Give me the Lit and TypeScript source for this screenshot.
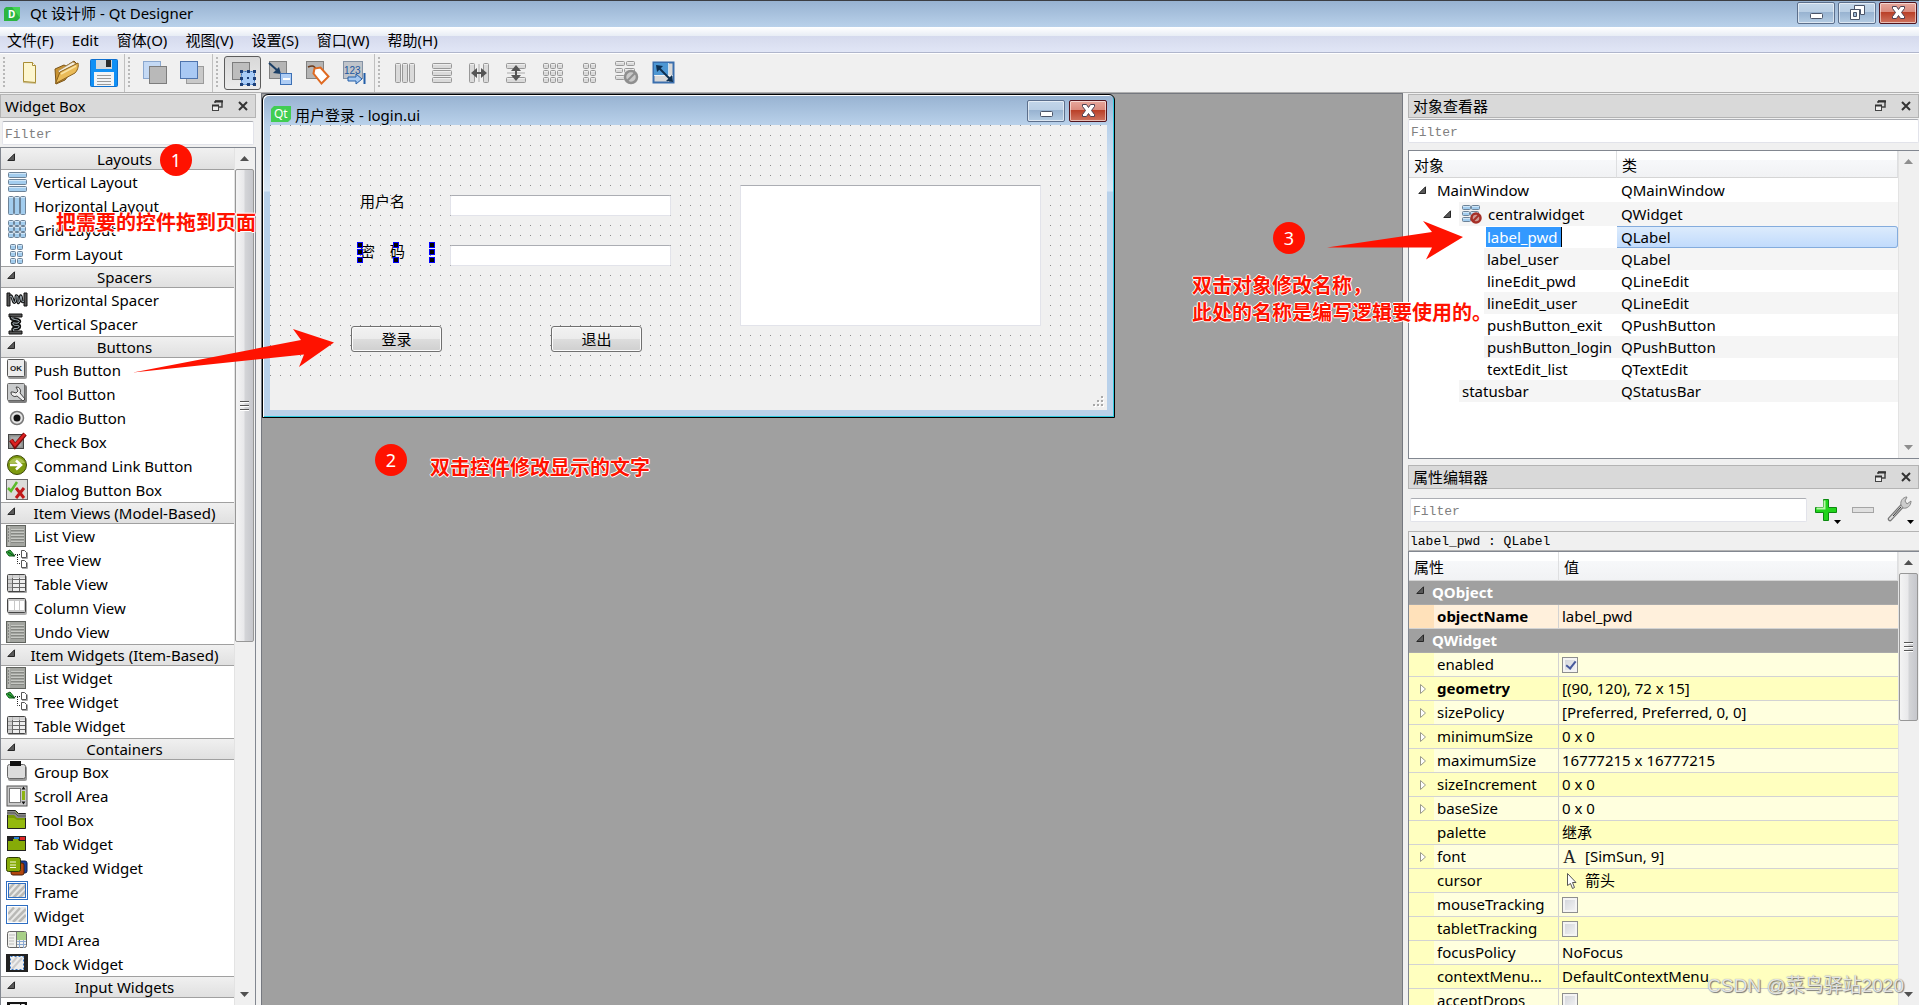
import { LitElement, html, svg, css, nothing, TemplateResult } from "lit";
import { customElement } from "lit/decorators.js";
import { classMap } from "lit/directives/class-map.js";

type Icon = TemplateResult;

const icon = (size: number, body: unknown): Icon =>
  html`<svg class="icon" width=${size} height=${size} viewBox="0 0 ${size} ${size}" aria-hidden="true">${body}</svg>`;

const bars = (rects: number[][], fill: string, stroke: string) =>
  rects.map(([x, y, w, h]) => svg`<rect x=${x + 0.5} y=${y + 0.5} width=${w - 1} height=${h - 1} rx="1" fill=${fill} stroke=${stroke}/>
    <rect x=${x + 1} y=${y + 1} width=${w - 2} height="1" fill="#fff" opacity=".5"/>`);

const cells = (cols: number, rows: number, x0: number, y0: number, size: number, pitch: number) =>
  Array.from({ length: cols * rows }, (_, i) => [x0 + (i % cols) * pitch, y0 + Math.floor(i / cols) * pitch, size, size]);

const BLUE = "#a3cdee";
const BLUE_EDGE = "#6d8398";
const GREY = "#dadada";
const GREY_EDGE = "#989898";

const listIcon = icon(22, svg`<rect x=".5" y=".5" width="19" height="21" fill="#a3a5a0" stroke="#60635e"/>
  <path d="M3 1v20" stroke="#c9cbc6" stroke-width="1"/>
  <path d="M2 4h1M2 7h1M2 10h1M2 13h1M2 16h1" stroke="#555"/>
  <path d="M5 4.500h13M5 7.500h13M5 10.500h13M5 13.500h13M5 16.500h13" stroke="#c6c8c3"/>
  <path d="M5 5.500h13M5 8.500h13M5 11.500h13M5 14.500h13M5 17.500h13" stroke="#868883"/>`);

const treeIcon = icon(22, svg`<path d="M0 3L4 1L9 7L3 7Z" fill="#2eb03c" stroke="#14581b"/><path d="M2 3L8 7" stroke="#0b4012"/>
  <path d="M9 5.500h6M11.500 6v8.500h4" fill="none" stroke="#222" stroke-dasharray="1 1"/>
  <path d="M15.500 1.500h3l2 2v5h-5zM15.500 11.500h3l2 2v5h-5z" fill="#fff" stroke="#555"/>
  <path d="M16 9.500h5.500v-6M16 19.500h5.500v-6" fill="none" stroke="#aaa"/>`);

const tableIcon = icon(22, svg`<rect x="2" y="3" width="19" height="17" rx="1" fill="#000" opacity=".35"/>
  <rect x="1.500" y="1.500" width="18" height="17" rx="1" fill="#eee" stroke="#444"/>
  <path d="M2 6.500h17M2 10.500h17M2 14.500h17M6.500 2v16M13.500 2v16" stroke="#666"/><rect x="2" y="2" width="17" height="3" fill="#ccc" opacity=".8"/><rect x="2" y="5" width="4" height="13" fill="#bbb" opacity=".6"/>`);

const hatch = (inner: boolean) => icon(22, svg`<rect x=".5" y=".5" width="21" height="18" fill="#e9e9e7" stroke="#2e6ec2"/>
  <path d="M3 15L14 3M7 17L20 4M2 9L8 2.500M13 17L20 10" stroke="#b9b9b6" stroke-width="2.500"/>
  <rect x=${inner ? 2.5 : 1.5} y=${inner ? 2.5 : 1.5} width=${inner ? 17 : 19} height=${inner ? 14 : 16} fill="none" stroke=${inner ? "#2e6ec2" : "#fff"}/>
  ${inner ? svg`<rect x="1.500" y="1.500" width="19" height="16" fill="none" stroke="#fff"/>` : nothing}`);

const ICONS: Record<string, Icon> = {
  vbox: icon(22, bars([[2, 1, 19, 6], [2, 8, 19, 6], [2, 15, 19, 6]], BLUE, BLUE_EDGE)),
  hbox: icon(22, bars([[2, 1, 6, 19], [8, 1, 6, 19], [14, 1, 6, 19]], BLUE, BLUE_EDGE)),
  grid: icon(22, bars(cells(3, 3, 2, 1, 6, 6), BLUE, BLUE_EDGE)),
  form: icon(22, bars(cells(2, 3, 4, 1, 6, 7), BLUE, BLUE_EDGE)),
  hspacer: icon(22, svg`<path d="M1 4h3v13H1zM18 4h3v13h-3z" fill="#555" stroke="#111"/><path d="M4 8C6 3 7 16 9 13S9 6 11 7S11 16 13 13S14 6 15 7S15 15 18 12" fill="none" stroke="#111" stroke-width="3"/><path d="M4 8C6 3 7 16 9 13S9 6 11 7S11 16 13 13S14 6 15 7S15 15 18 12" fill="none" stroke="#aebcc4" stroke-width="1"/>`),
  vspacer: icon(22, svg`<path d="M3 1h13v3H3zM3 18h13v3H3z" fill="#555" stroke="#111"/><path d="M6 4C3 7 15 6 13 9S6 8 7 11S14 11 13 14S5 14 8 18" fill="none" stroke="#111" stroke-width="4"/><path d="M6 4C3 7 15 6 13 9S6 8 7 11S14 11 13 14S5 14 8 18" fill="none" stroke="#aebcc4" stroke-width="1"/>`),
  push: icon(22, svg`<rect x="2" y="2" width="19" height="18" rx="2" fill="#000" opacity=".4"/><rect x="1.500" y=".5" width="17" height="17" rx="1" fill="#ececec" stroke="#555"/><text x="4" y="12" font-size="8" font-weight="bold" font-family="Liberation Sans, sans-serif" fill="#222">OK</text>`),
  tool: icon(22, svg`<rect x="2" y="2" width="19" height="18" rx="2" fill="#000" opacity=".5"/><rect x="1.500" y=".5" width="17" height="17" rx="1" fill="#c9cbcc" stroke="#666"/><path d="M5 9a4 4 0 0 0 6 4l6 5 2-2-5-6a4 4 0 0 0-4-6l2 4-2 2-3-1z" fill="#eee" stroke="#444"/>`),
  radio: icon(22, svg`<circle cx="11" cy="11" r="6.500" fill="#e4e4e4" stroke="#777" stroke-width="1.500"/><circle cx="11" cy="11" r="3.500" fill="#111"/>`),
  check: icon(22, svg`<rect x="2.500" y="3.500" width="15" height="14" fill="#8d8f8c" stroke="#444"/><rect x="4.500" y="5.500" width="11" height="10" fill="#aaa"/><path d="M5 9l4 6L19 3" fill="none" stroke="#7c0d0d" stroke-width="4.500"/><path d="M5 9l4 5L19 3" fill="none" stroke="#dd2020" stroke-width="2.500"/>`),
  command: icon(22, svg`<circle cx="11" cy="10" r="9.500" fill="#7d9a10" stroke="#3f4a0b"/><path d="M3 8a9 9 0 0 1 16 0z" fill="#b5cb62" opacity=".8"/><path d="M4 10h10M10 5.500l5 4.500-5 4.500" fill="none" stroke="#fff" stroke-width="2.500"/>`),
  dialog: icon(22, svg`<rect x=".5" y=".5" width="21" height="20" fill="#dcdcd9" stroke="#6a6a6a"/><path d="M2 9l3 3 6-9" fill="none" stroke="#5dbb2b" stroke-width="2.500"/><path d="M10 9l8 10M18 9l-8 10" stroke="#c11919" stroke-width="3"/>`),
  list: listIcon,
  tree: treeIcon,
  table: tableIcon,
  column: icon(22, svg`<rect x="2" y="3" width="19" height="15" rx="2" fill="#000" opacity=".3"/><rect x="1.500" y="1.500" width="18" height="14" rx="1" fill="#c8c8c8" stroke="#444"/><path d="M3 4h5v9H3zM9 4h4v9H9zM14 4h4v9h-4z" fill="#fff"/>`),
  group: icon(22, svg`<rect x="2" y="5" width="19" height="15" rx="2" fill="#000" opacity=".4"/><rect x="1.500" y="3.500" width="18" height="14" rx="2" fill="#dcdcdc" stroke="#666"/><rect x="4" y="0" width="11" height="5" fill="#111"/>`),
  scroll: icon(22, svg`<rect x="1" y="1" width="20" height="20" fill="#c8c8c8" stroke="#555"/><rect x="3.500" y="3.500" width="11" height="14" fill="#fff" stroke="#777"/><rect x="16" y="6" width="3" height="9" fill="#8db312"/><path d="M15.500 4.500l2-3 2 3zM15.500 16.500l2 3 2-3z" fill="#111"/>`),
  toolbox: icon(22, svg`<path d="M1.500 1.500h8l3 3h7v15h-18z" fill="#7a9b06" stroke="#222"/><path d="M1 2h8l3 3h8v4h-9l-3-3H1z" fill="#8c8c8c"/><path d="M1 4h8l3 3h8" fill="none" stroke="#555"/><path d="M2 9h6l3 2h8v8H2z" fill="#94b90e"/>`),
  tab: icon(22, svg`<rect x="1" y="3" width="19" height="15" fill="#222"/><path d="M2 8h5V6h5l1 2h6v9H2z" fill="#86ab08"/><rect x="8" y="4" width="5" height="2" fill="#2a80d2"/><rect x="14" y="4" width="5" height="3" fill="#dd2727"/>`),
  stacked: icon(22, svg`<rect x="8" y="4" width="13" height="12" rx="2" fill="#173e9c" stroke="#0b1e4d"/><rect x="5" y="6" width="13" height="12" rx="2" fill="#b3460e" stroke="#4d1f06"/><rect x=".5" y=".5" width="14" height="14" rx="2" fill="#86ab08" stroke="#2f3c03"/><path d="M4 5h6M4 8h6M4 10.500h6" stroke="#f3f8d8"/>`),
  frame: hatch(true),
  widget: hatch(false),
  mdi: icon(22, svg`<rect x="1.500" y="2.500" width="19" height="16" rx="2" fill="#f1f1ee" stroke="#666"/><rect x="11" y="3" width="9" height="8" fill="#a7cf87"/><path d="M3 6h6M3 9h5M3 12h5M3 15h5" stroke="#bbb"/><path d="M11 12.500h9M11 15.500h9M13.500 11v8M17.500 11v8" stroke="#8ba9d2"/><path d="M10.500 3v15" stroke="#777"/>`),
  dock: icon(22, svg`<rect x="0" y="1" width="22" height="18" fill="#222"/><rect x="4" y="3" width="14" height="14" fill="#ededed"/><path d="M6 16L16 5M6 10l5-6" stroke="#ccc" stroke-width="2"/><rect x="4.500" y="3.500" width="13" height="13" fill="none" stroke="#3477c9" stroke-dasharray="2 2"/>`),
  combo: icon(22, svg`<rect x="1" y="3" width="20" height="16" fill="#151515"/><path d="M4 6h10" stroke="#eee" stroke-width="2"/><path d="M15 5h4l-2 4z" fill="#fff"/>`),
};

const GROUPS: { title: string; items: [string, string][] }[] = [
  { title: "Layouts", items: [["vbox", "Vertical Layout"], ["hbox", "Horizontal Layout"], ["grid", "Grid Layout"], ["form", "Form Layout"]] },
  { title: "Spacers", items: [["hspacer", "Horizontal Spacer"], ["vspacer", "Vertical Spacer"]] },
  { title: "Buttons", items: [["push", "Push Button"], ["tool", "Tool Button"], ["radio", "Radio Button"], ["check", "Check Box"], ["command", "Command Link Button"], ["dialog", "Dialog Button Box"]] },
  { title: "Item Views (Model-Based)", items: [["list", "List View"], ["tree", "Tree View"], ["table", "Table View"], ["column", "Column View"], ["list", "Undo View"]] },
  { title: "Item Widgets (Item-Based)", items: [["list", "List Widget"], ["tree", "Tree Widget"], ["table", "Table Widget"]] },
  { title: "Containers", items: [["group", "Group Box"], ["scroll", "Scroll Area"], ["toolbox", "Tool Box"], ["tab", "Tab Widget"], ["stacked", "Stacked Widget"], ["frame", "Frame"], ["widget", "Widget"], ["mdi", "MDI Area"], ["dock", "Dock Widget"]] },
  { title: "Input Widgets", items: [["combo", "Combo Box"]] },
];

const sheet = (x: number, y: number, fill: string, edge: string) => svg`<rect x=${x + 0.5} y=${y + 0.5} width="17" height="17" fill=${fill} stroke=${edge}/>`;

const TOOLS: { label: string; checked?: boolean; icon: Icon }[][] = [
  [
    { label: "New", icon: icon(28, svg`<path d="M9 5h8l3 3v17l-13-1V5z" fill="#a58a2c" opacity=".45"/><path d="M7.500 3.500h9l3 3v17l-12-1z" fill="#fdf6cf" stroke="#a98d35"/><path d="M16.500 3.500v3h3" fill="#fff" stroke="#a98d35"/>`) },
    { label: "Open", icon: icon(28, svg`<path d="M2 10l9-4 2 1 8-5 3 3-12 16-9 4z" fill="#c89333" stroke="#7b5417"/><path d="M5 12L20 3l3 2-13 12z" fill="#f5efdf" stroke="#a58a5a" stroke-width=".7"/><path d="M2.500 24.500L7 13l18-9c1 4-1 8-3 10z" fill="#eabb58" stroke="#8a601c"/><path d="M8 15l15-8" stroke="#f9e2a2" stroke-width="1.500"/>`) },
    { label: "Save", icon: icon(28, svg`<rect x=".5" y=".5" width="27" height="27" rx="1" fill="#1090f5" stroke="#0f70cf"/><rect x="6" y="1" width="16" height="9" fill="#d4d8dc"/><rect x="16" y="1" width="5" height="7" fill="#2c2c2c"/><rect x="4" y="13" width="20" height="14" fill="#f2f4f6"/><path d="M7 16.500h14M7 19.500h14M7 22.500h14M7 25.500h14" stroke="#9a9a9a"/>`) },
  ],
  [
    { label: "Send to back", icon: icon(28, svg`${sheet(2, 2, "#c4d9f4", "#8ba8cf")}${sheet(8, 7, "#b9b9b9", "#7d7d7d")}`) },
    { label: "Bring to front", icon: icon(28, svg`${sheet(8, 7, "#c9c9c9", "#9b9b9b")}${sheet(2, 2, "#a9c9f4", "#4e74ad")}`) },
  ],
  [
    { label: "Edit widgets", checked: true, icon: icon(28, svg`${sheet(3, 3, "#bdbdbd", "#7d7d7d")}<rect x="12.500" y="12.500" width="13" height="13" fill="#a8ccf8" stroke="#3471be" stroke-dasharray="2 1"/>${[[11, 11], [18, 11], [24, 11], [11, 18], [24, 18], [11, 24], [18, 24], [24, 24]].map(([x, y]) => svg`<rect x=${x} y=${y} width="3" height="3" fill="#1d3f78"/>`)}<rect x="18" y="18" width="2" height="2" fill="#1d3f78"/>`) },
    { label: "Edit signals/slots", icon: icon(28, svg`${sheet(3, 2, "#b5b5b5", "#828282")}<path d="M3 4l9 8" stroke="#1c3f66" stroke-width="2"/><path d="M15 15l-2-7-6 6z" fill="#1c3f66"/><rect x="14.500" y="14.500" width="11" height="11" fill="#aecdf5" stroke="#3c70b5"/><rect x="17" y="19" width="7" height="2" fill="#fff"/>`) },
    { label: "Edit buddies", icon: icon(28, svg`${sheet(3, 2, "#b5b5b5", "#828282")}<path d="M5 8c5-2 7-1 8 3" fill="none" stroke="#6b3a1b" stroke-width="1.500"/><path d="M10.500 14.500l1-5 6-1 8 9-7 7z" fill="#fff" stroke="#df6a22" stroke-width="2"/>`) },
    { label: "Edit tab order", icon: icon(28, svg`<rect x="3.500" y="2.500" width="19" height="17" fill="#c0c4ca" stroke="#8593a5"/><text x="4" y="15" font-size="10" font-family="Liberation Sans, sans-serif" fill="#22579e">123</text><path d="M8 18h8v-3l6 5-6 5v-3H8z" fill="#a5c8f0" stroke="#235ea8"/><path d="M24.500 14v11" stroke="#235ea8" stroke-width="2"/>`) },
  ],
  [
    { label: "Lay out horizontally", icon: icon(28, bars([[4, 4, 6, 20], [11, 4, 6, 20], [18, 4, 6, 20]], GREY, GREY_EDGE)) },
    { label: "Lay out vertically", icon: icon(28, bars([[4, 4, 20, 6], [4, 11, 20, 6], [4, 18, 20, 6]], GREY, GREY_EDGE)) },
    { label: "Lay out horizontally in splitter", icon: icon(28, svg`${bars([[4, 4, 6, 20], [18, 4, 6, 20]], GREY, GREY_EDGE)}<path d="M14 5v18" stroke="#aaa"/><path d="M9 14h10" stroke="#555" stroke-width="2"/><path d="M6 14l6-5v10zM22 14l-6-5v10z" fill="#555"/>`) },
    { label: "Lay out vertically in splitter", icon: icon(28, svg`${bars([[4, 4, 20, 6], [4, 18, 20, 6]], GREY, GREY_EDGE)}<path d="M5 14h18" stroke="#aaa"/><path d="M14 9v10" stroke="#555" stroke-width="2"/><path d="M14 6l5 6H9zM14 22l5-6H9z" fill="#555"/>`) },
    { label: "Lay out in a grid", icon: icon(28, bars(cells(3, 3, 4, 4, 6, 7), GREY, GREY_EDGE)) },
    { label: "Lay out in a form", icon: icon(28, bars(cells(2, 3, 7, 4, 6, 7), GREY, GREY_EDGE)) },
    { label: "Break layout", icon: icon(28, svg`${bars([[2, 2, 10, 5], [13, 2, 9, 5], [2, 9, 8, 5], [11, 9, 11, 5], [2, 16, 10, 5]], GREY, GREY_EDGE)}<circle cx="18" cy="18" r="6" fill="#c9c9c9" stroke="#8f8f8f" stroke-width="2.500"/><path d="M14 22l8-8" stroke="#8f8f8f" stroke-width="2"/>`) },
    { label: "Adjust size", icon: icon(28, svg`<rect x="3.500" y="3.500" width="20" height="20" fill="#d8d8d8" stroke="#3a6fae" stroke-width="2"/><path d="M4 4h15v12H4z" fill="#4d97d3"/><path d="M18.500 4v19M4 16.500h19" stroke="#fff" opacity=".7"/><path d="M8 8l12 12" stroke="#0d2f50" stroke-width="2"/><path d="M6 6l7 1-6 6zM23 23l-7-1 6-6z" fill="#0d2f50"/>`) },
  ],
];

const brokenLayout = icon(20, svg`${bars([[0, 1, 9, 5], [9, 1, 9, 5], [0, 7, 8, 5], [8, 7, 9, 5], [0, 13, 9, 5]], BLUE, BLUE_EDGE)}<circle cx="14" cy="14" r="4.500" fill="#cf9a94" stroke="#a52f27" stroke-width="2.500"/><path d="M11 17l6-6" stroke="#a52f27" stroke-width="2"/>`);

const OBJECTS: { name: string; cls: string; depth: number; open?: boolean; icon?: boolean; editing?: boolean }[] = [
  { name: "MainWindow", cls: "QMainWindow", depth: 0, open: true },
  { name: "centralwidget", cls: "QWidget", depth: 1, open: true, icon: true },
  { name: "label_pwd", cls: "QLabel", depth: 2, editing: true },
  { name: "label_user", cls: "QLabel", depth: 2 },
  { name: "lineEdit_pwd", cls: "QLineEdit", depth: 2 },
  { name: "lineEdit_user", cls: "QLineEdit", depth: 2 },
  { name: "pushButton_exit", cls: "QPushButton", depth: 2 },
  { name: "pushButton_login", cls: "QPushButton", depth: 2 },
  { name: "textEdit_list", cls: "QTextEdit", depth: 2 },
  { name: "statusbar", cls: "QStatusBar", depth: 1 },
];

interface Prop { name: string; value?: string; check?: boolean; fold?: boolean; bold?: boolean; glyph?: "font" | "cursor" }
const PROPS: { title: string; tone: string; rows: Prop[] }[] = [
  { title: "QObject", tone: "peach", rows: [{ name: "objectName", value: "label_pwd", bold: true }] },
  {
    title: "QWidget", tone: "yellow", rows: [
      { name: "enabled", check: true },
      { name: "geometry", value: "[(90, 120), 72 x 15]", fold: true, bold: true },
      { name: "sizePolicy", value: "[Preferred, Preferred, 0, 0]", fold: true },
      { name: "minimumSize", value: "0 x 0", fold: true },
      { name: "maximumSize", value: "16777215 x 16777215", fold: true },
      { name: "sizeIncrement", value: "0 x 0", fold: true },
      { name: "baseSize", value: "0 x 0", fold: true },
      { name: "palette", value: "继承" },
      { name: "font", value: "[SimSun, 9]", fold: true, glyph: "font" },
      { name: "cursor", value: "箭头", glyph: "cursor" },
      { name: "mouseTracking", check: false },
      { name: "tabletTracking", check: false },
      { name: "focusPolicy", value: "NoFocus" },
      { name: "contextMenuPolicy", value: "DefaultContextMenu" },
      { name: "acceptDrops", check: false },
    ],
  },
];

const openTwist = html`<svg class="twist" width="9" height="9" viewBox="0 0 9 9" aria-hidden="true"><path d="M7.500 .8V7.500H.8z" fill="#595959" stroke="#262626"/></svg>`;
const shutTwist = html`<svg class="twist" width="8" height="12" viewBox="0 0 8 12" aria-hidden="true"><path d="M1.500 1.500v9L6.500 6z" fill="#fff" stroke="#9a9a8a"/></svg>`;
const arrow = (up: boolean, dim: boolean) => html`<svg width="9" height="5" viewBox="0 0 9 5" aria-hidden="true"><path d=${up ? "M0 5L4.500 0L9 5z" : "M0 0L4.500 5L9 0z"} fill=${dim ? "#8e8e8e" : "#505050"}/></svg>`;

const winGlyph = {
  min: svg`<rect x="6.500" y="10.500" width="12" height="5" rx="1" fill="#fff" stroke="#4a5468"/>`,
  restore: svg`<path d="M9.500 2.500h10v9h-4v-5h-6z" fill="#fff" stroke="#4a5468"/><path fill-rule="evenodd" d="M5.500 6.500h9v10h-9zM8.500 9.500h3v4h-3z" fill="#fff" stroke="#4a5468"/>`,
  close: svg`<path d="M6.500 3.500h4l2 3 2-3h4v2L15.500 9.500l3 4v2h-4l-2-3-2 3h-4v-2l3-4-3-4z" fill="#fff" stroke="#4c4152"/>`,
};
const winButton = (kind: keyof typeof winGlyph, label: string) => html`
  <button class=${classMap({ caption: true, danger: kind === "close" })} aria-label=${label}>
    <svg width="25" height="19" viewBox="0 0 25 19" aria-hidden="true">${winGlyph[kind]}</svg>
  </button>`;

const shared = css`
  * { box-sizing: border-box; }
  button { font: inherit; color: inherit; margin: 0; padding: 0; border: 0; background: none; text-align: left; }
  svg { display: block; flex: none; }
  .edit {
    display: block; height: 24px; margin: 0; padding: 2px 2px 0; background: #fff; color: #000;
    border: 1px solid #e2e3ea; border-top-color: #abadb3; border-radius: 2px;
    font: 13px/20px "Liberation Mono", "Noto Sans CJK SC", monospace; outline: 0; min-width: 0; width: 100%;
  }
  .edit::placeholder { color: #808080; opacity: 1; }
  .caption {
    display: flex; align-items: center; justify-content: center; width: 38px; height: 22px;
    border: 1px solid #5c6f8c; border-radius: 2px; box-shadow: inset 0 0 0 1px rgba(255, 255, 255, .55);
    background: linear-gradient(#c3d6e9, #b9cee4 45%, #97b2d0 45%, #b4cce3);
  }
  .danger { border-color: #53141d; background: linear-gradient(#e7a79c, #d98a7c 45%, #b93e26 45%, #cf7460); }
`;

@customElement("scroll-bar")
class ScrollBar extends LitElement {
  static properties = { length: { type: Number } };
  declare length: number;
  constructor() { super(); this.length = 0; }
  static styles = css`
    :host { display: flex; flex-direction: column; flex: none; width: 21px; padding: 0 1px 0 0; background: #f0f0f0; border-left: 1px solid #e3e3e3; box-sizing: border-box; }
    button { display: flex; justify-content: center; align-items: center; height: 21px; flex: none; border: 0; padding: 0; margin: 0; background: none; }
    .track { flex: 1; min-height: 0; }
    .thumb {
      display: flex; flex-direction: column; gap: 3px; justify-content: center; align-items: center; box-sizing: border-box;
      border: 1px solid #979797; border-radius: 2px; background: linear-gradient(90deg, #f4f4f4, #e9e9eb 45%, #d3d4d7 55%, #c6c7cc);
    }
    .thumb i { width: 9px; height: 1px; background: #555; box-shadow: 0 1px #fff; }
    svg { display: block; }
  `;
  render() {
    return html`
      <button aria-label="Scroll up">${arrow(true, !this.length)}</button>
      <div class="track">${this.length ? html`<div class="thumb" style="height:${this.length}%"><i></i><i></i><i></i></div>` : nothing}</div>
      <button aria-label="Scroll down">${arrow(false, !this.length)}</button>`;
  }
}

@customElement("dock-title")
class DockTitle extends LitElement {
  static properties = { label: {} };
  declare label: string;
  static styles = [shared, css`
    :host { display: flex; align-items: center; flex: none; height: 24px; padding: 0 5px 0 4px; gap: 12px; border: 1px solid #b4b4b4; background: #d9d9d9; box-sizing: border-box; }
    h2 { flex: 1; margin: 0; font: inherit; }
  `];
  render() {
    return html`<h2>${this.label}</h2>
      <button aria-label="Float"><svg width="14" height="14" viewBox="0 0 14 14"><path d="M5 2h7v6H9M5 2v2" fill="none" stroke="#444" stroke-width="1.500"/><path d="M5 2.500h8" stroke="#333" stroke-width="2"/><rect x="2.500" y="6.500" width="6" height="5" fill="#eee" stroke="#444"/><path d="M2 6.500h7" stroke="#333" stroke-width="2"/></svg></button>
      <button aria-label="Close"><svg width="14" height="14" viewBox="0 0 14 14"><path d="M3 3l8 8M11 3l-8 8" stroke="#333" stroke-width="2"/></svg></button>`;
  }
}

@customElement("widget-box")
class WidgetBox extends LitElement {
  static styles = [shared, css`
    :host { display: flex; flex-direction: column; flex: none; width: 256px; padding-top: 1px; min-height: 0; }
    .filter { padding: 3px 2px 2px; }
    .body { flex: 1; min-height: 0; display: flex; border: 1px solid #828790; border-bottom: 0; background: #fff; }
    .list { flex: 1; min-width: 0; overflow: hidden; }
    .head {
      display: flex; align-items: center; width: 100%; height: 22px; padding-left: 6px;
      border-top: 1px solid #a0a0a0; border-bottom: 1px solid #a0a0a0; background: linear-gradient(#f0f0f0, #e0e0e0);
    }
    section:first-child .head { border-top-color: #f0f0f0; }
    .head .twist { margin-bottom: 4px; }
    .head span { flex: 1; text-align: center; padding-right: 1px; }
    .item { display: flex; align-items: center; gap: 6px; width: 100%; height: 24px; padding-left: 5px; white-space: nowrap; }
  `];
  render() {
    return html`
      <dock-title label="Widget Box"></dock-title>
      <div class="filter"><input class="edit" type="text" placeholder="Filter" aria-label="Filter widgets"></div>
      <div class="body">
        <div class="list">
          ${GROUPS.map(g => html`<section>
            <button class="head">${openTwist}<span>${g.title}</span></button>
            ${g.items.map(([key, label]) => html`<button class="item">${ICONS[key]}<span>${label}</span></button>`)}
          </section>`)}
        </div>
        <scroll-bar .length=${58}></scroll-bar>
      </div>`;
  }
}

@customElement("form-window")
class FormWindow extends LitElement {
  static styles = [shared, css`
    :host {
      display: flex; flex-direction: column; width: 853px; padding: 1px 6px 7px;
      border: 1px solid #000; border-radius: 6px 6px 0 0; box-sizing: border-box;
      background: linear-gradient(#97b2d1, #b9d1ea 30px, #d9e7f5 96px, #b9d1ea 97px);
      box-shadow: inset 1px 1px #fff, inset -1px -1px #2fc9de;
    }
    header { display: flex; align-items: center; gap: 4px; height: 29px; padding: 0 1px 0 2px; }
    header h1 { flex: 1; margin: 0; padding: 8px 0 0; font: inherit; }
    header .logo { margin-top: 7px; }
    .canvas { position: relative; height: 285px; margin: 0 1px; background: #f0f0f0; }
    .dots { position: absolute; inset: 0 0 auto 0; width: 100%; height: 251px; }
    .canvas > :not(.dots) { position: absolute; }
    label { line-height: 20px; white-space: pre; }
    .line { width: 221px; height: 21px; left: 180px; }
    .user-label { left: 90px; top: 66px; }
    .pwd-label { left: 90px; top: 116px; }
    .user { top: 70px; }
    .pwd { top: 120px; }
    .text { left: 470px; top: 60px; width: 301px; height: 141px; border-radius: 0; resize: none; }
    .push {
      top: 201px; width: 91px; height: 26px; text-align: center; border: 1px solid #707070; border-radius: 3px;
      box-shadow: inset 0 0 0 1px #fbfbfb; background: linear-gradient(#f2f2f2, #ebebeb 48%, #dddddd 50%, #cfcfcf);
    }
    .login { left: 81px; }
    .exit { left: 281px; }
    .handles { left: 87px; top: 117px; }
    .grip { right: 3px; bottom: 2px; }
  `];
  render() {
    return html`
      <header>
        <svg class="logo" width="20" height="16" viewBox="0 0 20 16" aria-hidden="true"><path d="M3 0h17v13l-3 3H0V3z" fill="#41cd52"/><text x="3" y="12" font-size="12" font-family="Noto Sans, sans-serif" fill="#fff">Qt</text></svg>
        <h1>用户登录 - login.ui</h1>
        ${winButton("min", "Minimize form")}${winButton("close", "Close form")}
      </header>
      <div class="canvas">
        <svg class="dots" aria-hidden="true"><defs><pattern id="dot" width="10" height="10" patternUnits="userSpaceOnUse"><rect width="1" height="1" fill="#8c8c8c"/></pattern></defs><rect width="100%" height="100%" fill="url(#dot)"/></svg>
        <label class="user-label" for="user">用户名</label>
        <input class="edit line user" id="user" type="text">
        <label class="pwd-label" for="pwd">密　码</label>
        <input class="edit line pwd" id="pwd" type="text">
        <textarea class="edit text" aria-label="List"></textarea>
        <button class="push login">登录</button>
        <button class="push exit">退出</button>
        <svg class="handles" width="78" height="22" viewBox="0 0 78 22" aria-hidden="true">
          ${[0, 36, 72].map(x => [0, 7, 15].map(y => (x === 36 && y === 7 ? nothing : svg`<rect x=${x + 0.5} y=${y + 0.5} width="5" height="5" fill="#000" stroke="#0000ff"/>`)))}
        </svg>
        <svg class="grip" width="11" height="12" viewBox="0 0 11 12" aria-hidden="true">
          ${[[8, 0], [4, 4], [8, 4], [0, 8], [4, 8], [8, 8]].map(([x, y]) => svg`<rect x=${x + 1} y=${y + 1} width="2" height="2" fill="#fff"/><rect x=${x} y=${y} width="2" height="2" fill="#a8a8a8"/>`)}
        </svg>
      </div>`;
  }
}

const panelTable = css`
  .pane { display: flex; min-height: 0; border: 1px solid #828790; border-right: 0; background: #fff; }
  .view { flex: 1; min-width: 0; overflow: hidden; }
  table { width: 100%; border-collapse: separate; border-spacing: 0; table-layout: fixed; }
  th, td { padding: 0; font-weight: normal; text-align: left; white-space: nowrap; overflow: hidden; }
  thead th { background: linear-gradient(#fff 9px, #f7f8fa 9px, #f1f2f4); border-bottom: 1px solid #d5d5d5; border-right: 1px solid #dedfe1; padding: 2px 0 0 5px; line-height: 20px; }
`;

@customElement("object-inspector")
class ObjectInspector extends LitElement {
  static styles = [shared, panelTable, css`
    :host { display: flex; flex-direction: column; flex: none; }
    .filter { padding: 1px 0 7px; }
    .pane { height: 309px; }
    thead th { height: 27px; }
    .name-col { width: 208px; }
    tbody tr { height: 22px; line-height: 20px; }
    tbody tr.tall { height: 24px; }
    .cell { display: flex; align-items: center; height: 100%; }
    .branch { display: flex; justify-content: flex-end; align-items: center; flex: none; width: 25px; padding-right: 7px; }
    .deep { width: 50px; }
    .deeper { width: 75px; }
    .label { display: flex; align-items: center; gap: 6px; flex: 1; height: 22px; padding-left: 3px; }
    .tall .label { height: 24px; }
    .odd .label, .odd .kind { background: #f5f5f5; }
    .kind { padding-left: 4px; }
    .chosen .kind { border: 1px solid #84acdd; border-left: 0; border-radius: 0 3px 3px 0; background: linear-gradient(#dcebfc, #c1dbfc); }
    .rename { width: 76px; height: 20px; margin: 0 0 0 -1px; padding: 0 0 0 1px; border: 0; border-right: 1px solid #000; background: #3399ff; color: #fff; font: inherit; outline: 0; }
  `];
  render() {
    return html`
      <dock-title label="对象查看器"></dock-title>
      <div class="filter"><input class="edit" type="text" placeholder="Filter" aria-label="Filter objects"></div>
      <div class="pane">
        <div class="view">
          <table>
            <colgroup><col class="name-col"><col></colgroup>
            <thead><tr><th>对象</th><th>类</th></tr></thead>
            <tbody>${OBJECTS.map((o, i) => html`
              <tr class=${classMap({ odd: i % 2 === 1, tall: i < 2, chosen: !!o.editing })}>
                <td><div class="cell">
                  <span class=${classMap({ branch: true, deep: o.depth === 1, deeper: o.depth === 2 })}>${o.open ? openTwist : nothing}</span>
                  <span class="label">${o.icon ? brokenLayout : nothing}${o.editing
                    ? html`<input class="rename" type="text" .value=${o.name} aria-label="Object name">` : o.name}</span>
                </div></td>
                <td class="kind">${o.cls}</td>
              </tr>`)}
            </tbody>
          </table>
        </div>
        <scroll-bar></scroll-bar>
      </div>`;
  }
}

@customElement("property-editor")
class PropertyEditor extends LitElement {
  static styles = [shared, panelTable, css`
    :host { display: flex; flex-direction: column; flex: 1; min-height: 0; }
    .bar { display: flex; align-items: center; gap: 3px; height: 42px; padding: 0 1px 0 2px; }
    .bar .edit { flex: 1; }
    .action { display: flex; justify-content: center; width: 34px; }
    .path { height: 20px; border: 1px solid #b4b4b4; border-right: 0; padding-left: 1px; font: 13px/19px "Liberation Mono", monospace; }
    .pane { flex: 1; margin-top: 0; border-bottom: 0; }
    thead th { height: 29px; }
    .name-col { width: 150px; }
    tbody td, tbody th { height: 24px; line-height: 23px; border-bottom: 1px solid #d3d3d3; }
    tbody td:first-child { border-right: 1px solid #d3d3d3; }
    tbody th { background: #a0a0a0; color: #fff; font-weight: bold; border-bottom-color: #aaa; }
    .cell { display: flex; align-items: center; height: 23px; }
    .stub { display: flex; align-items: center; justify-content: center; flex: none; align-self: stretch; width: 25px; padding-left: 2px; margin-right: 3px; }
    th .stub { width: 20px; padding-bottom: 4px; }
    .name { overflow: hidden; text-overflow: ellipsis; padding-right: 8px; }
    .wide { padding-right: 0; }
    .bold { font-weight: bold; }
    .yellow { background: #ffffde; }
    .yellow .stub { background: #ffffbf; }
    .yellow.alt { background: #ffffbf; }
    .peach { background: #fff0dc; }
    .peach .stub { background: #ffe1ba; }
    .value { gap: 7px; padding-left: 3px; }
    .tick {
      appearance: none; display: block; width: 16px; height: 16px; margin: 0; border: 1px solid #8e8f8f;
      background: linear-gradient(135deg, #cfd2d8, #f6f6f6); box-shadow: inset 0 0 0 2px #f4f4f4;
    }
    .tick:checked { position: relative; }
    .tick:checked::after { content: ""; position: absolute; left: 5px; top: 1px; width: 4px; height: 8px; border: solid #46599c; border-width: 0 2px 2px 0; transform: rotate(38deg); }
  `];
  render() {
    return html`
      <dock-title label="属性编辑器"></dock-title>
      <div class="bar">
        <input class="edit" type="text" placeholder="Filter" aria-label="Filter properties">
        <button class="action" aria-label="Add dynamic property"><svg width="28" height="28" viewBox="0 0 28 28"><path d="M10.500 3.500h5v8h8v5h-8v8h-5v-8h-8v-5h8z" fill="#22d41c" stroke="#0c8a10"/><path d="M11.500 4.500v8h-8" fill="none" stroke="#b6f7a8" stroke-width="2"/><path d="M21 24h7l-3.500 4z" fill="#000"/></svg></button>
        <button class="action" aria-label="Remove dynamic property"><svg width="28" height="28" viewBox="0 0 28 28"><rect x="2.500" y="11.500" width="21" height="5" fill="#e0e0e0" stroke="#a5a5a5"/></svg></button>
        <button class="action" aria-label="Configure"><svg width="28" height="28" viewBox="0 0 28 28"><path d="M3 23L16 9" stroke="#777" stroke-width="4.500" stroke-linecap="round"/><path d="M3 23L16 9" stroke="#ddd" stroke-width="2" stroke-linecap="round"/><path d="M6 20l8-9" stroke="#333"/><path d="M14 9c-1-4 2-8 6-8l-2 4 2 3 4-3c0 5-4 8-8 7z" fill="#ccc" stroke="#888"/><path d="M20 24h7l-3.500 4z" fill="#000"/></svg></button>
      </div>
      <div class="path">label_pwd : QLabel</div>
      <div class="pane">
        <div class="view">
          <table>
            <colgroup><col class="name-col"><col></colgroup>
            <thead><tr><th>属性</th><th>值</th></tr></thead>
            <tbody>${PROPS.map(g => html`
              <tr><th colspan="2"><div class="cell"><span class="stub">${openTwist}</span>${g.title}</div></th></tr>
              ${g.rows.map((p, i) => html`
                <tr class=${classMap({ [g.tone]: true, alt: i % 2 === 1 })}>
                  <td><div class="cell"><span class="stub">${p.fold ? shutTwist : nothing}</span>
                    <span class=${classMap({ name: true, bold: !!p.bold, wide: p.name.length < 15 })}>${p.name}</span></div></td>
                  <td><div class="cell value">
                    ${p.check !== undefined ? html`<input class="tick" type="checkbox" .checked=${p.check} aria-label=${p.name}>` : nothing}
                    ${p.glyph === "font" ? html`<svg width="16" height="20" viewBox="0 0 16 20" aria-hidden="true"><text x="1" y="16" font-size="18" font-family="Liberation Serif, serif" fill="#222">A</text></svg>` : nothing}
                    ${p.glyph === "cursor" ? html`<svg width="16" height="20" viewBox="0 0 16 20" aria-hidden="true"><path d="M5.500 2.500v12l3-2 2 5 2-1-2-5h3.500z" fill="#fff" stroke="#555"/></svg>` : nothing}
                    ${p.value ?? nothing}</div></td>
                </tr>`)}`)}
            </tbody>
          </table>
        </div>
        <scroll-bar .length=${36}></scroll-bar>
      </div>`;
  }
}

@customElement("app-root")
class AppRoot extends LitElement {
  static styles = [shared, css`
    :host {
      display: flex; flex-direction: column; height: 100vh; position: relative; overflow: hidden; background: #f0f0f0; color: #000;
      font: 15px/20px "Noto Sans", "Noto Sans CJK SC", sans-serif;
    }
    .title { display: flex; align-items: center; gap: 10px; flex: none; height: 27px; padding: 0 2px 0 4px; border-top: 1px solid #3b3d42; background: linear-gradient(#97b2d1, #b9d1ea); }
    .title h1 { flex: 1; margin: 0; padding-bottom: 2px; font: inherit; }
    .captions { display: flex; gap: 3px; padding-bottom: 3px; }
    .menus { display: flex; flex: none; gap: 18px; height: 26px; padding: 0 7px; border-bottom: 1px solid #b0b6cc; background: linear-gradient(#fff, #e8edf5 9px, #d5daed 9px, #e1e6f6); }
    .tools { display: flex; flex: none; height: 40px; border-bottom: 1px solid #b0b0b0; border-top: 1px solid #fff; }
    .set { display: flex; align-items: center; padding: 0 2px 0 3px; border-right: 1px solid #c0c0c0; }
    .set:last-child { border-right: 0; }
    .set::before { content: ""; width: 2px; height: 32px; margin-right: 6px; background: repeating-linear-gradient(#b8b8b8 0 2px, transparent 2px 4px); }
    .tool { display: flex; align-items: center; justify-content: center; width: 37px; height: 34px; border: 1px solid transparent; border-radius: 3px; }
    .tool.checked { border-color: #5c5c5c; background: linear-gradient(#d8d8d8, #ececec); }
    .work { display: flex; flex: 1; min-height: 0; gap: 5px; }
    .mdi { flex: 1; min-width: 0; overflow: hidden; border: 1px solid #75787f; border-bottom: 0; background: #a0a0a0; }
    .right { display: flex; flex-direction: column; flex: none; gap: 6px; width: 511px; padding-top: 1px; }
    .notes > * { position: absolute; pointer-events: none; }
    .note { color: #ff1200; margin: 0; font-weight: bold; font-size: 20px; line-height: 27px; white-space: pre; font-family: "Noto Sans CJK SC", sans-serif; text-shadow: 1px 0 #fff, -1px 0 #fff, 0 1px #fff, 0 -1px #fff; }
    .badge { width: 32px; height: 32px; border-radius: 50%; background: #ff1200; color: #fff; font-size: 18px; line-height: 33px; text-align: center; }
    .b1 { left: 160px; top: 144px; }
    .t1 { left: 56px; top: 208px; }
    .a1 { left: 133px; top: 326px; }
    .b2 { left: 375px; top: 444px; }
    .t2 { left: 430px; top: 453px; }
    .b3 { right: 614px; top: 222px; }
    .t3 { right: 427px; top: 271px; }
    .a3 { right: 455px; top: 220px; }
    .mark { right: 15px; bottom: 5px; font-size: 19px; line-height: 28px; color: rgba(255, 255, 255, .8); text-shadow: 1px 1px 1px #777, 0 0 1px #777; font-family: "Liberation Sans", "Noto Sans CJK SC", sans-serif; }
  `];
  render() {
    return html`
      <header class="title">
        <svg width="16" height="16" viewBox="0 0 16 16" aria-hidden="true"><path d="M2 1h14v11l-3 3H0V3z" fill="#2cb53f"/><path d="M2 1h14v11L8 1z" fill="#43d455"/><text x="4" y="12" font-size="10" font-weight="bold" font-family="Noto Sans, sans-serif" fill="#fff">D</text></svg>
        <h1>Qt 设计师 - Qt Designer</h1>
        <div class="captions">${winButton("min", "Minimize")}${winButton("restore", "Restore")}${winButton("close", "Close")}</div>
      </header>
      <nav class="menus">${["文件(F)", "Edit", "窗体(O)", "视图(V)", "设置(S)", "窗口(W)", "帮助(H)"].map(m => html`<button>${m}</button>`)}</nav>
      <div class="tools">${TOOLS.map(set => html`<div class="set">${set.map(t => html`<button class=${classMap({ tool: true, checked: !!t.checked })} aria-label=${t.label}>${t.icon}</button>`)}</div>`)}</div>
      <main class="work">
        <widget-box></widget-box>
        <div class="mdi"><form-window></form-window></div>
        <div class="right">
          <object-inspector></object-inspector>
          <property-editor></property-editor>
        </div>
      </main>
      <div class="notes">
        <div class="badge b1">1</div>
        <p class="note t1">把需要的控件拖到页面</p>
        <svg class="a1" width="202" height="48" viewBox="0 0 202 48" aria-hidden="true"><path d="M0 46.500L168 14L160 3L201 16.500L166 41L171 28.500z" fill="#ff1200"/></svg>
        <div class="badge b2">2</div>
        <p class="note t2">双击控件修改显示的文字</p>
        <div class="badge b3">3</div>
        <p class="note t3">双击对象修改名称，
此处的名称是编写逻辑要使用的。</p>
        <svg class="a3" width="137" height="40" viewBox="0 0 137 40" aria-hidden="true"><path d="M0 27.500L105 12L96 1L136 17L99 39.500L105 27.500z" fill="#ff1200"/></svg>
        <div class="mark">CSDN @菜鸟驿站2020</div>
      </div>`;
  }
}
